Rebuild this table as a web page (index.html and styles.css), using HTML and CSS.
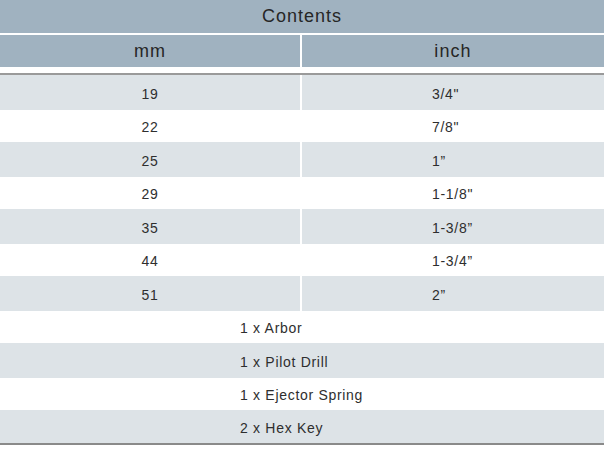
FILE: index.html
```html
<!DOCTYPE html>
<html>
<head>
<meta charset="utf-8">
<link rel="stylesheet" href="styles.css">
</head>
<body>
<div class="table">
  <div class="title">Contents</div>
  <div class="colhead">
    <div class="hcell">mm</div>
    <div class="hcell">inch</div>
  </div>
  <div class="rows">
    <div class="row shade"><div class="c mm">19</div><div class="c in">3/4"</div></div>
    <div class="row"><div class="c mm">22</div><div class="c in">7/8"</div></div>
    <div class="row shade"><div class="c mm">25</div><div class="c in">1”</div></div>
    <div class="row"><div class="c mm">29</div><div class="c in">1-1/8"</div></div>
    <div class="row shade"><div class="c mm">35</div><div class="c in">1-3/8”</div></div>
    <div class="row"><div class="c mm">44</div><div class="c in">1-3/4”</div></div>
    <div class="row shade"><div class="c mm">51</div><div class="c in">2”</div></div>
    <div class="row full"><div class="item">1 x Arbor</div></div>
    <div class="row full shade"><div class="item">1 x Pilot Drill</div></div>
    <div class="row full"><div class="item">1 x Ejector Spring</div></div>
    <div class="row full shade last"><div class="item">2 x Hex Key</div></div>
  </div>
</div>
</body>
</html>
```

FILE: styles.css
```css
* { box-sizing: border-box; }
html, body { margin: 0; padding: 0; background: #fff; }
body {
  font-family: "Liberation Sans", Arial, sans-serif;
  color: #2e2e2e;
  width: 604px;
}
.table { width: 604px; }
.title {
  height: 33px;
  background: #a0b2c0;
  display: flex;
  align-items: center;
  justify-content: center;
  font-size: 18px;
  letter-spacing: 1px;
  color: #262626;
}
.colhead {
  margin-top: 2px;
  height: 32px;
  display: grid;
  grid-template-columns: 300px 302px;
  column-gap: 2px;
}
.hcell {
  background: #a0b2c0;
  display: flex;
  align-items: center;
  justify-content: center;
  font-size: 18px;
  letter-spacing: 1.1px;
  color: #262626;
  padding-top: 1px;
}
.rows {
  margin-top: 6px;
  border-top: 2px solid #9a9a9a;
}
.row {
  height: 32px;
  display: grid;
  grid-template-columns: 300px 302px;
  column-gap: 2px;
  font-size: 14px;
  letter-spacing: 0.7px;
  padding-top: 2px;
}
.row.shade { height: 35px; padding-top: 0; }
.row.shade .c { background: #dde3e7; padding-top: 3px; }
.c {
  display: flex;
  align-items: center;
}
.c.mm { justify-content: center; }
.c.in { padding-left: 130px; }
.row.full { display: flex; align-items: center; }
.row.full.shade { background: #dde3e7; padding-top: 3px; }
.item { padding-left: 240px; }
.row.last { height: 35px; border-bottom: 2px solid #8a8a8a; }
```
